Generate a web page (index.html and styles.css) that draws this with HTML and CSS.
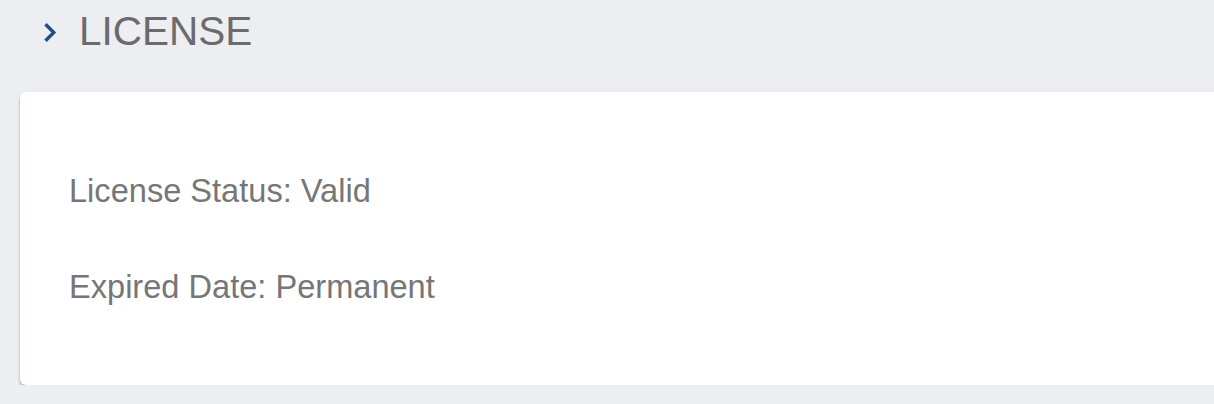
FILE: index.html
```html
<!DOCTYPE html>
<html lang="en">
<head>
  <meta charset="UTF-8" />
  <meta name="viewport" content="width=device-width, initial-scale=1.0" />
  <title>License</title>
  <link rel="stylesheet" href="styles.css">
</head>
<body>
  <div class="section">
    <div class="section-header">
      <svg class="chevron" width="15" height="21" viewBox="0 0 15 21" aria-hidden="true">
        <path d="M2.5 2.2 L10.8 10.5 L2.5 18.8" fill="none" stroke="currentColor" stroke-width="3.4" />
      </svg>
      <h1>LICENSE</h1>
    </div>

    <div class="card">
      <p>License Status: Valid</p>
      <p>Expired Date: Permanent</p>
    </div>
  </div>
</body>
</html>
```

FILE: styles.css
```css
:root {
  --bg: #edeef2;
  --white: #fff;
  --title: #6b6b6d;
  --text: #767676;
  --blue: #1d4f88;
}

* {
  box-sizing: border-box;
}

body {
  font-family: "Liberation Sans", Arial, sans-serif;
  margin: 0;
  background-color: var(--bg);
  overflow-x: hidden;
}

.section {
  padding-left: 20px;
}

.section-header {
  display: flex;
  align-items: center;
  gap: 21px;
  height: 62px;
  padding-left: 23px;
  margin-bottom: 30px;
}

.chevron {
  color: var(--blue);
  flex-shrink: 0;
  margin-top: 2px;
}

h1 {
  margin: 0;
  font-size: 40.5px;
  font-weight: normal;
  line-height: 62px;
  color: var(--title);
}

.card {
  margin-right: -20px;
  background-color: var(--white);
  border-radius: 6px;
  padding: 51px 48px 50px 49px;
  box-shadow: 0 2px 3px rgba(0, 0, 0, 0.32);
}

.card p {
  margin: 0;
  font-size: 32.6px;
  line-height: 96px;
  color: var(--text);
}
```
